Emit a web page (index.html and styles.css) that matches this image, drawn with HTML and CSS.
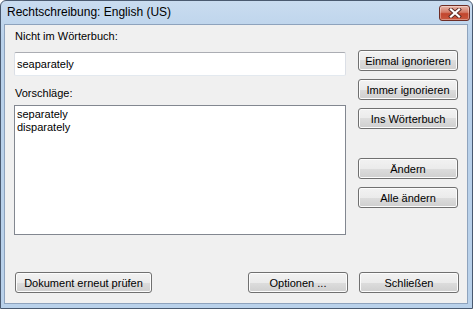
FILE: index.html
```html
<!DOCTYPE html>
<html lang="de">
<head>
  <meta charset="UTF-8">
  <title>Rechtschreibung</title>
  <link rel="stylesheet" href="styles.css">
</head>
<body>
  <div class="window">
    <!-- Title bar -->
    <div class="title-bar">
      <span class="title-text">Rechtschreibung: English (US)</span>
      <button class="close-button" aria-label="Schließen">
        <svg width="14" height="10" viewBox="0 0 14 10">
          <path d="M3 1.5 L11 8.5 M11 1.5 L3 8.5" stroke="#5a2a24" stroke-width="4" stroke-linecap="square"/>
          <path d="M3 1.5 L11 8.5 M11 1.5 L3 8.5" stroke="#fff" stroke-width="2.2" stroke-linecap="square"/>
        </svg>
      </button>
    </div>

    <!-- Dialog body -->
    <div class="client">
      <div class="main-row">
        <div class="left-col">
          <label class="field-label">Nicht im Wörterbuch:</label>
          <div class="word-box">seaparately</div>
          <label class="field-label second">Vorschläge:</label>
          <div class="suggestion-list">
            <div class="suggestion">separately</div>
            <div class="suggestion">disparately</div>
          </div>
        </div>
        <div class="right-col">
          <button class="btn">Einmal ignorieren</button>
          <button class="btn">Immer ignorieren</button>
          <button class="btn">Ins Wörterbuch</button>
          <button class="btn spaced">Ändern</button>
          <button class="btn">Alle ändern</button>
        </div>
      </div>

      <div class="bottom-row">
        <button class="btn wide">Dokument erneut prüfen</button>
        <button class="btn push">Optionen ...</button>
        <button class="btn">Schließen</button>
      </div>
    </div>
  </div>
</body>
</html>
```

FILE: styles.css
```css
body {
  margin: 0;
  background-color: #fff;
  font-family: "Liberation Sans", Arial, sans-serif;
}

.window {
  width: 473px;
  height: 309px;
  box-sizing: border-box;
  border: 1px solid #4a5a70;
  border-radius: 6px 6px 0 0;
  background: linear-gradient(#c9dcf0, #b9d1ea 40px, #b9d1ea);
  padding: 0 4px 4px 3px;
  display: flex;
  flex-direction: column;
}

.title-bar {
  height: 23px;
  display: flex;
  align-items: center;
  padding-left: 3px;
}

.title-text {
  font-size: 12px;
  color: #000;
  margin-top: -1px;
}

.close-button {
  margin-left: auto;
  margin-right: -2px;
  margin-top: 0;
  width: 31px;
  height: 16px;
  padding: 0;
  border: 1px solid #6e2d25;
  border-radius: 3px;
  background: linear-gradient(#e8b6aa, #d47a66 45%, #c2452d 55%, #c8583f);
  box-shadow: inset 0 0 0 1px rgba(255, 255, 255, 0.35);
  display: flex;
  align-items: center;
  justify-content: center;
}

.client {
  flex: 1;
  background-color: #f0f0f0;
  border: 1px solid #8ea3bd;
  padding: 5px 9px 10px 9px;
  display: flex;
  flex-direction: column;
}

.main-row {
  display: flex;
  gap: 12px;
}

.left-col {
  width: 332px;
  display: flex;
  flex-direction: column;
}

.field-label {
  font-size: 11px;
  line-height: 13px;
  color: #000;
  padding-left: 1px;
}

.field-label.second {
  margin-top: 11px;
}

.word-box {
  margin-top: 9px;
  height: 24px;
  box-sizing: border-box;
  background-color: #fff;
  border: 1px solid #dbdfe6;
  border-top-color: #abadb3;
  border-bottom-color: #e3e9ef;
  border-radius: 2px;
  padding: 0 2px;
  font-size: 11px;
  line-height: 22px;
}

.suggestion-list {
  margin-top: 5px;
  height: 130px;
  box-sizing: border-box;
  background-color: #fff;
  border: 1px solid #828790;
  padding: 2px 1px;
}

.suggestion {
  font-size: 11px;
  line-height: 13px;
  padding-left: 1px;
}

.right-col {
  width: 100px;
  padding-top: 20px;
  display: flex;
  flex-direction: column;
  gap: 8px;
}

.btn {
  height: 21px;
  padding: 0 6px;
  box-sizing: border-box;
  border: 1px solid #707070;
  border-radius: 3px;
  background: linear-gradient(#f2f2f2, #ebebeb 50%, #dddddd 50%, #cfcfcf);
  box-shadow: inset 0 0 0 1px #fcfcfc;
  font-family: "Liberation Sans", Arial, sans-serif;
  font-size: 11px;
  font-weight: normal;
  color: #000;
  cursor: pointer;
}

.right-col .btn {
  width: 100px;
}

.btn.spaced {
  margin-top: 21px;
}

.bottom-row {
  margin-top: auto;
  display: flex;
  gap: 11px;
  padding-left: 1px;
  margin-right: -1px;
}

.bottom-row .btn {
  width: 100px;
}

.bottom-row .btn.wide {
  width: 137px;
}

.btn.push {
  margin-left: auto;
}
```
